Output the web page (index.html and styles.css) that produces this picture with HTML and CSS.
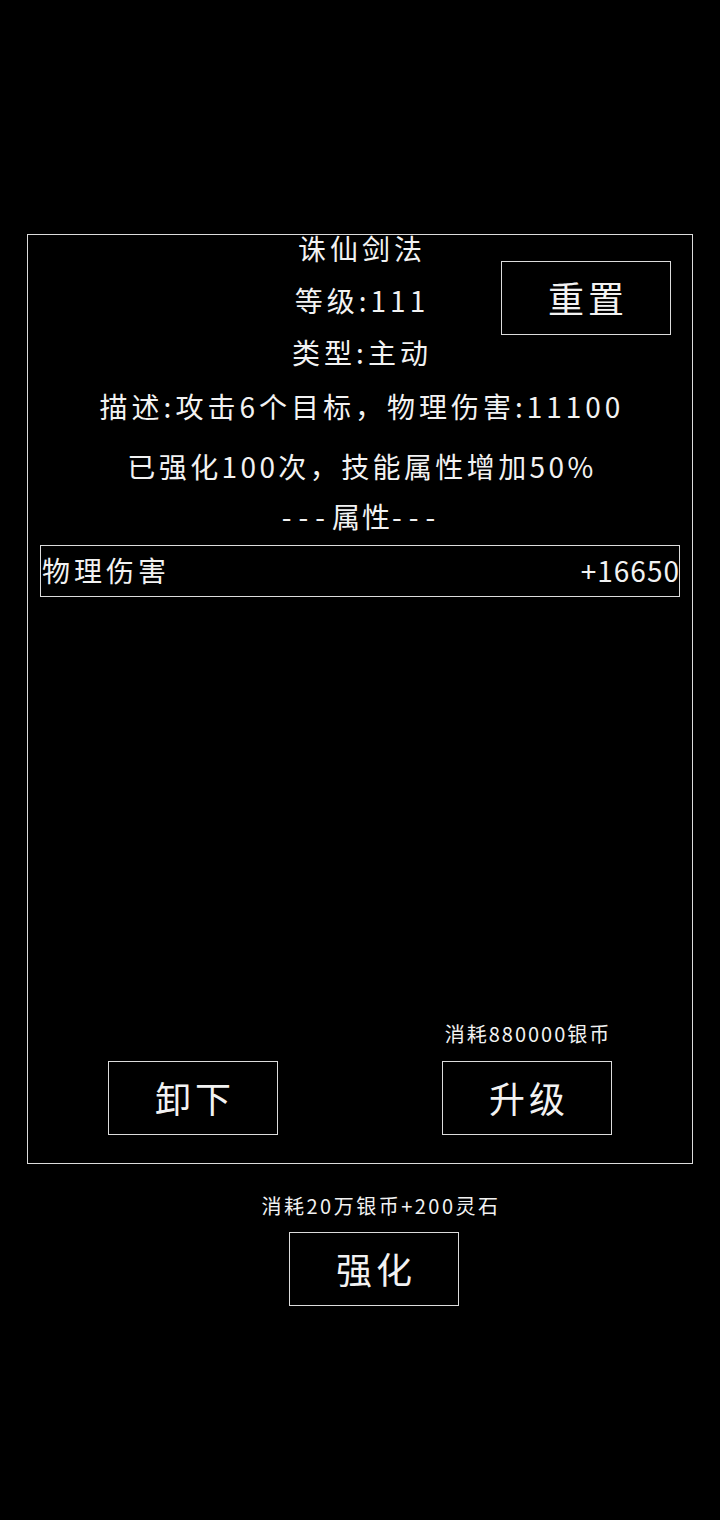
FILE: index.html
```html
<!DOCTYPE html>
<html lang="zh-CN">
<head>
<meta charset="utf-8">
<title>诛仙剑法</title>
<link rel="stylesheet" href="styles.css">
</head>
<body>
<div class="page">
  <section class="panel">
    <div class="head">
      <div class="head-lines">
        <div class="line">诛仙剑法</div>
        <div class="line">等级:111</div>
        <div class="line">类型:主动</div>
      </div>
      <div class="btn btn-reset">重置</div>
    </div>
    <div class="line desc">描述:攻击6个目标，物理伤害:11100</div>
    <div class="line enh">已强化100次，技能属性增加50%</div>
    <div class="line sect"><span class="dash">---</span>属性<span class="dash">---</span></div>
    <div class="attr">
      <span class="attr-name">物理伤害</span>
      <span class="attr-val">+16650</span>
    </div>
    <div class="foot">
      <div class="foot-col">
        <div class="btn">卸下</div>
      </div>
      <div class="foot-col">
        <div class="cost">消耗880000银币</div>
        <div class="btn">升级</div>
      </div>
    </div>
  </section>
  <div class="enhance">
    <div class="cost">消耗20万银币+200灵石</div>
    <div class="btn">强化</div>
  </div>
</div>
</body>
</html>
```

FILE: styles.css
```css
html, body {
  margin: 0;
  padding: 0;
  background: #000;
}
body {
  width: 720px;
  height: 1520px;
  color: #f2f2f2;
  font-family: "Noto Sans CJK SC", "Noto Sans", sans-serif;
  font-weight: 400;
}
.page {
  padding-top: 234px;
  display: flex;
  flex-direction: column;
}
.panel {
  margin: 0 27px;
  width: 666px;
  height: 930px;
  box-sizing: border-box;
  border: 1px solid #dcdcdc;
  display: flex;
  flex-direction: column;
}
.line {
  font-size: 28px;
  line-height: 30px;
  letter-spacing: 4px;
  text-align: center;
  white-space: nowrap;
  padding-left: 4px;
}
.head {
  display: grid;
  grid-template-columns: 1fr auto 1fr;
}
.head-lines {
  grid-column: 2;
  margin-top: -2px;
  display: flex;
  flex-direction: column;
  gap: 22px;
}
.btn-reset {
  grid-column: 3;
  justify-self: end;
  align-self: start;
  margin-top: 26px;
  margin-right: 21px;
  padding-bottom: 3px;
}
.desc {
  margin-top: 24px;
}
.enh {
  margin-top: 30px;
  letter-spacing: 3.4px;
}
.sect {
  margin-top: 20px;
  letter-spacing: 2px;
}
.dash {
  letter-spacing: 7px;
}
.attr {
  margin: 14px 12px 0;
  height: 52px;
  box-sizing: border-box;
  border: 1px solid #dcdcdc;
  display: flex;
  align-items: center;
  justify-content: space-between;
  padding: 0 0 2px 1px;
  font-size: 28px;
  letter-spacing: 4px;
  white-space: nowrap;
}
.attr-val {
  letter-spacing: 1px;
  margin-right: -1px;
}
.btn {
  width: 170px;
  height: 74px;
  box-sizing: border-box;
  border: 1px solid #dcdcdc;
  display: flex;
  align-items: center;
  justify-content: center;
  font-size: 36px;
  letter-spacing: 4px;
  padding-left: 4px;
  padding-bottom: 2px;
}
.foot {
  margin-top: auto;
  padding: 0 80px 28px;
  display: flex;
  justify-content: space-between;
  align-items: flex-end;
}
.foot-col {
  display: flex;
  flex-direction: column;
  align-items: center;
}
.cost {
  font-size: 20px;
  line-height: 24px;
  letter-spacing: 2px;
  padding-left: 2px;
  white-space: nowrap;
  margin-bottom: 15px;
}
.enhance {
  margin-top: 30px;
  padding-left: 28px;
  display: flex;
  flex-direction: column;
  align-items: center;
}
.enhance .cost {
  letter-spacing: 2.5px;
  margin-left: 12px;
  margin-bottom: 14px;
}
```
